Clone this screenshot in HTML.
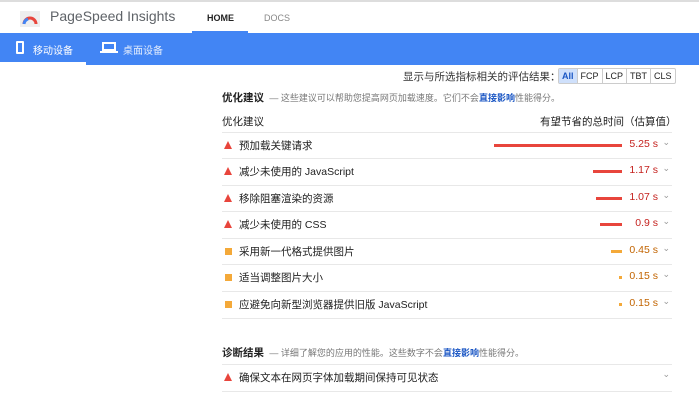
<!DOCTYPE html>
<html><head><meta charset="utf-8"><style>
*{margin:0;padding:0;box-sizing:border-box}
body{width:699px;height:400px;overflow:hidden;background:#fff;font-family:"Liberation Sans","Noto Sans CJK SC",sans-serif;color:#212121;position:relative}
.top{position:absolute;left:0;top:0;width:699px;height:33px;background:#fff;border-top:2px solid #ddd}
.blue{position:absolute;left:0;top:33px;width:699px;height:32px;background:#4285f4;color:#fff;font-size:10px}
.abs{position:absolute}
.row{position:absolute;left:222px;width:450px;height:26px;border-top:1px solid #e8e8e8;font-size:10.5px}
.row .t{position:absolute;left:17px;top:5px}
.ic{position:absolute;left:2px;top:8px}
.tri{width:0;height:0;border-left:4px solid transparent;border-right:4px solid transparent;border-bottom:8px solid #e8453c}
.sq{width:7px;height:7px;background:#f4a939;top:9px;left:3px}
.bar{position:absolute;height:3px;top:11px;right:50px}
.v{position:absolute;right:14px;top:5px;font-size:10.5px}
.ch{position:absolute;right:2px;top:4px;color:#999;font-size:9px}
</style></head><body>
<div class="top">
<svg class="abs" style="left:20px;top:9px" width="20" height="16"><rect x="0" y="0" width="20" height="16" fill="#eee"/><path d="M4 13 A6 6 0 0 1 16 13" stroke="#e8453c" stroke-width="3" fill="none"/><path d="M4 13 A6 6 0 0 1 8 8" stroke="#4285f4" stroke-width="3" fill="none"/></svg>
<div class="abs" style="left:50px;top:6px;font-size:14px;color:#5f6368">PageSpeed Insights</div>
<div class="abs" style="left:207px;top:11px;font-size:9px;color:#222;font-weight:bold">HOME</div>
<div class="abs" style="left:192px;top:29px;width:56px;height:3px;background:#4285f4"></div>
<div class="abs" style="left:264px;top:11px;font-size:9px;color:#888">DOCS</div>
</div>
<div class="blue">
<div class="abs" style="left:16px;top:8px;width:8px;height:13px;border:2px solid #fff;border-radius:1px"></div>
<div class="abs" style="left:33px;top:9px">移动设备</div>
<div class="abs" style="left:0;top:29px;width:86px;height:3px;background:#fff"></div>
<div class="abs" style="left:102px;top:9px;width:14px;height:9px;border:2px solid #fff"></div>
<div class="abs" style="left:100px;top:18px;width:18px;height:2px;background:#fff"></div>
<div class="abs" style="left:123px;top:9px;opacity:.85">桌面设备</div>
</div>
<div class="abs" style="left:403px;top:69px;font-size:10.5px;color:#333">显示与所选指标相关的评估结果：</div>
<div class="abs" style="left:558px;top:68px;display:flex;font-size:9px;border:1px solid #ccc;border-radius:2px">
<span style="padding:2px 3px;background:#cfe0fb;color:#1a56c4;font-weight:bold">All</span><span style="padding:2px 3px;border-left:1px solid #ccc">FCP</span><span style="padding:2px 3px;border-left:1px solid #ccc">LCP</span><span style="padding:2px 3px;border-left:1px solid #ccc">TBT</span><span style="padding:2px 3px;border-left:1px solid #ccc">CLS</span></div>
<div class="abs" style="left:222px;top:90px;font-size:10.5px;font-weight:bold">优化建议 <span style="font-weight:normal;font-size:9px;color:#777">&nbsp;— 这些建议可以帮助您提高网页加载速度。它们不会<b style="color:#1a56c4">直接影响</b>性能得分。</span></div>
<div class="abs" style="left:222px;top:114px;font-size:10.5px">优化建议</div>
<div class="abs" style="left:540px;top:114px;font-size:10.5px">有望节省的总时间（估算值）</div>
<div class="row" style="top:132px"><div class="ic tri"></div><div class="t">预加载关键请求</div><div class="bar" style="width:128px;background:#e8453c"></div><div class="v" style="color:#c5221f">5.25 s</div><div class="ch">⌄</div></div>
<div class="row" style="top:158px"><div class="ic tri"></div><div class="t">减少未使用的 JavaScript</div><div class="bar" style="width:29px;background:#e8453c"></div><div class="v" style="color:#c5221f">1.17 s</div><div class="ch">⌄</div></div>
<div class="row" style="top:185px"><div class="ic tri"></div><div class="t">移除阻塞渲染的资源</div><div class="bar" style="width:26px;background:#e8453c"></div><div class="v" style="color:#c5221f">1.07 s</div><div class="ch">⌄</div></div>
<div class="row" style="top:211px"><div class="ic tri"></div><div class="t">减少未使用的 CSS</div><div class="bar" style="width:22px;background:#e8453c"></div><div class="v" style="color:#c5221f">0.9 s</div><div class="ch">⌄</div></div>
<div class="row" style="top:238px"><div class="ic sq"></div><div class="t">采用新一代格式提供图片</div><div class="bar" style="width:11px;background:#f4a939"></div><div class="v" style="color:#c26401">0.45 s</div><div class="ch">⌄</div></div>
<div class="row" style="top:264px"><div class="ic sq"></div><div class="t">适当调整图片大小</div><div class="bar" style="width:3px;background:#f4a939"></div><div class="v" style="color:#c26401">0.15 s</div><div class="ch">⌄</div></div>
<div class="row" style="top:291px"><div class="ic sq"></div><div class="t">应避免向新型浏览器提供旧版 JavaScript</div><div class="bar" style="width:3px;background:#f4a939"></div><div class="v" style="color:#c26401">0.15 s</div><div class="ch">⌄</div></div>
<div class="row" style="top:318px;height:1px"></div>
<div class="abs" style="left:222px;top:345px;font-size:10.5px;font-weight:bold">诊断结果 <span style="font-weight:normal;font-size:9px;color:#777">&nbsp;— 详细了解您的应用的性能。这些数字不会<b style="color:#1a56c4">直接影响</b>性能得分。</span></div>
<div class="row" style="top:364px"><div class="ic tri"></div><div class="t">确保文本在网页字体加载期间保持可见状态</div><div class="ch">⌄</div></div>
<div class="row" style="top:391px"></div>
</body></html>
